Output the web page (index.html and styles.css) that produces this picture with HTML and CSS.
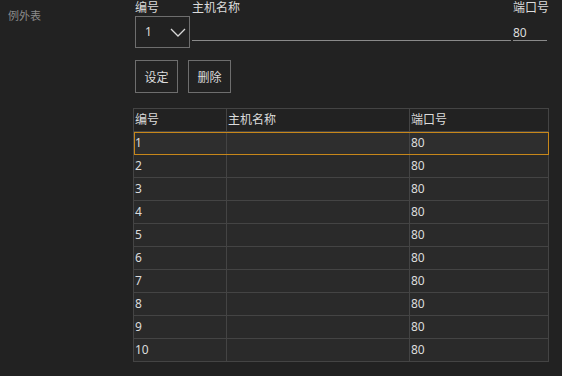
FILE: index.html
```html
<!DOCTYPE html>
<html lang="zh-CN">
<head>
    <meta charset="UTF-8">
    <title>例外表</title>
    <link rel="stylesheet" href="styles.css">
</head>
<body>
    <div class="page">
        <div class="side">例外表</div>
        <div class="main">
            <div class="form">
                <label class="lbl">编号</label>
                <label class="lbl">主机名称</label>
                <label class="lbl">端口号</label>
                <div class="select">
                    <span>1</span>
                    <svg width="16" height="9" viewBox="0 0 16 9"><path d="M1 1 L8 8 L15 1" fill="none" stroke="#d8d8d8" stroke-width="1.3"/></svg>
                </div>
                <div class="field"></div>
                <div class="field">80</div>
            </div>
            <div class="buttons">
                <button>设定</button>
                <button>删除</button>
            </div>
            <table class="grid">
                <thead>
                    <tr><th class="c1">编号</th><th class="c2">主机名称</th><th>端口号</th></tr>
                </thead>
                <tbody>
                    <tr class="sel"><td>1</td><td></td><td>80</td></tr>
                    <tr><td>2</td><td></td><td>80</td></tr>
                    <tr><td>3</td><td></td><td>80</td></tr>
                    <tr><td>4</td><td></td><td>80</td></tr>
                    <tr><td>5</td><td></td><td>80</td></tr>
                    <tr><td>6</td><td></td><td>80</td></tr>
                    <tr><td>7</td><td></td><td>80</td></tr>
                    <tr><td>8</td><td></td><td>80</td></tr>
                    <tr><td>9</td><td></td><td>80</td></tr>
                    <tr><td>10</td><td></td><td>80</td></tr>
                </tbody>
            </table>
        </div>
    </div>
</body>
</html>
```

FILE: styles.css
```css
body {
    margin: 0;
    background: #222222;
    color: #dcdcdc;
    font-family: "Noto Sans", "Noto Sans CJK SC", sans-serif;
    font-size: 12px;
}
.page {
    display: flex;
    height: 376px;
}
.side {
    width: 133px;
    padding: 8px 0 0 8px;
    box-sizing: border-box;
    color: #8a8a8a;
    font-size: 11px;
    line-height: 16px;
}
.main {
    width: 416px;
}
.form {
    display: grid;
    grid-template-columns: 55px 319px 34px;
    column-gap: 2px;
    margin-left: 2px;
}
.lbl {
    line-height: 16px;
    height: 16px;
    white-space: nowrap;
}
.select {
    height: 32px;
    border: 1px solid #6e6e6e;
    box-sizing: border-box;
    display: flex;
    align-items: center;
    justify-content: space-between;
    padding: 0 3px 2px 9px;
}
.select svg {
    margin-top: 2px;
}
.field {
    height: 24px;
    border-bottom: 1px solid #8a8a8a;
    line-height: 34px;
}
.buttons {
    display: flex;
    gap: 10px;
    margin: 12px 0 15px 2px;
}
button {
    width: 43px;
    height: 33px;
    padding: 0;
    background: transparent;
    border: 1px solid #6e6e6e;
    color: #dcdcdc;
    font-family: inherit;
    font-size: 12px;
}
.grid {
    width: 416px;
    border-collapse: collapse;
    border: 1px solid #484848;
}
.grid th, .grid td {
    height: 22px;
    padding: 0 0 0 1px;
    border: 1px solid #444444;
    text-align: left;
    font-weight: normal;
    line-height: 22px;
}
.grid .c1 { width: 91px; }
.grid .c2 { width: 181px; }
.grid tbody tr { background: #2a2a2a; }
.grid tbody tr.sel { background: #2e2e2e; outline: 1px solid #c7871a; outline-offset: -1px; }
```
